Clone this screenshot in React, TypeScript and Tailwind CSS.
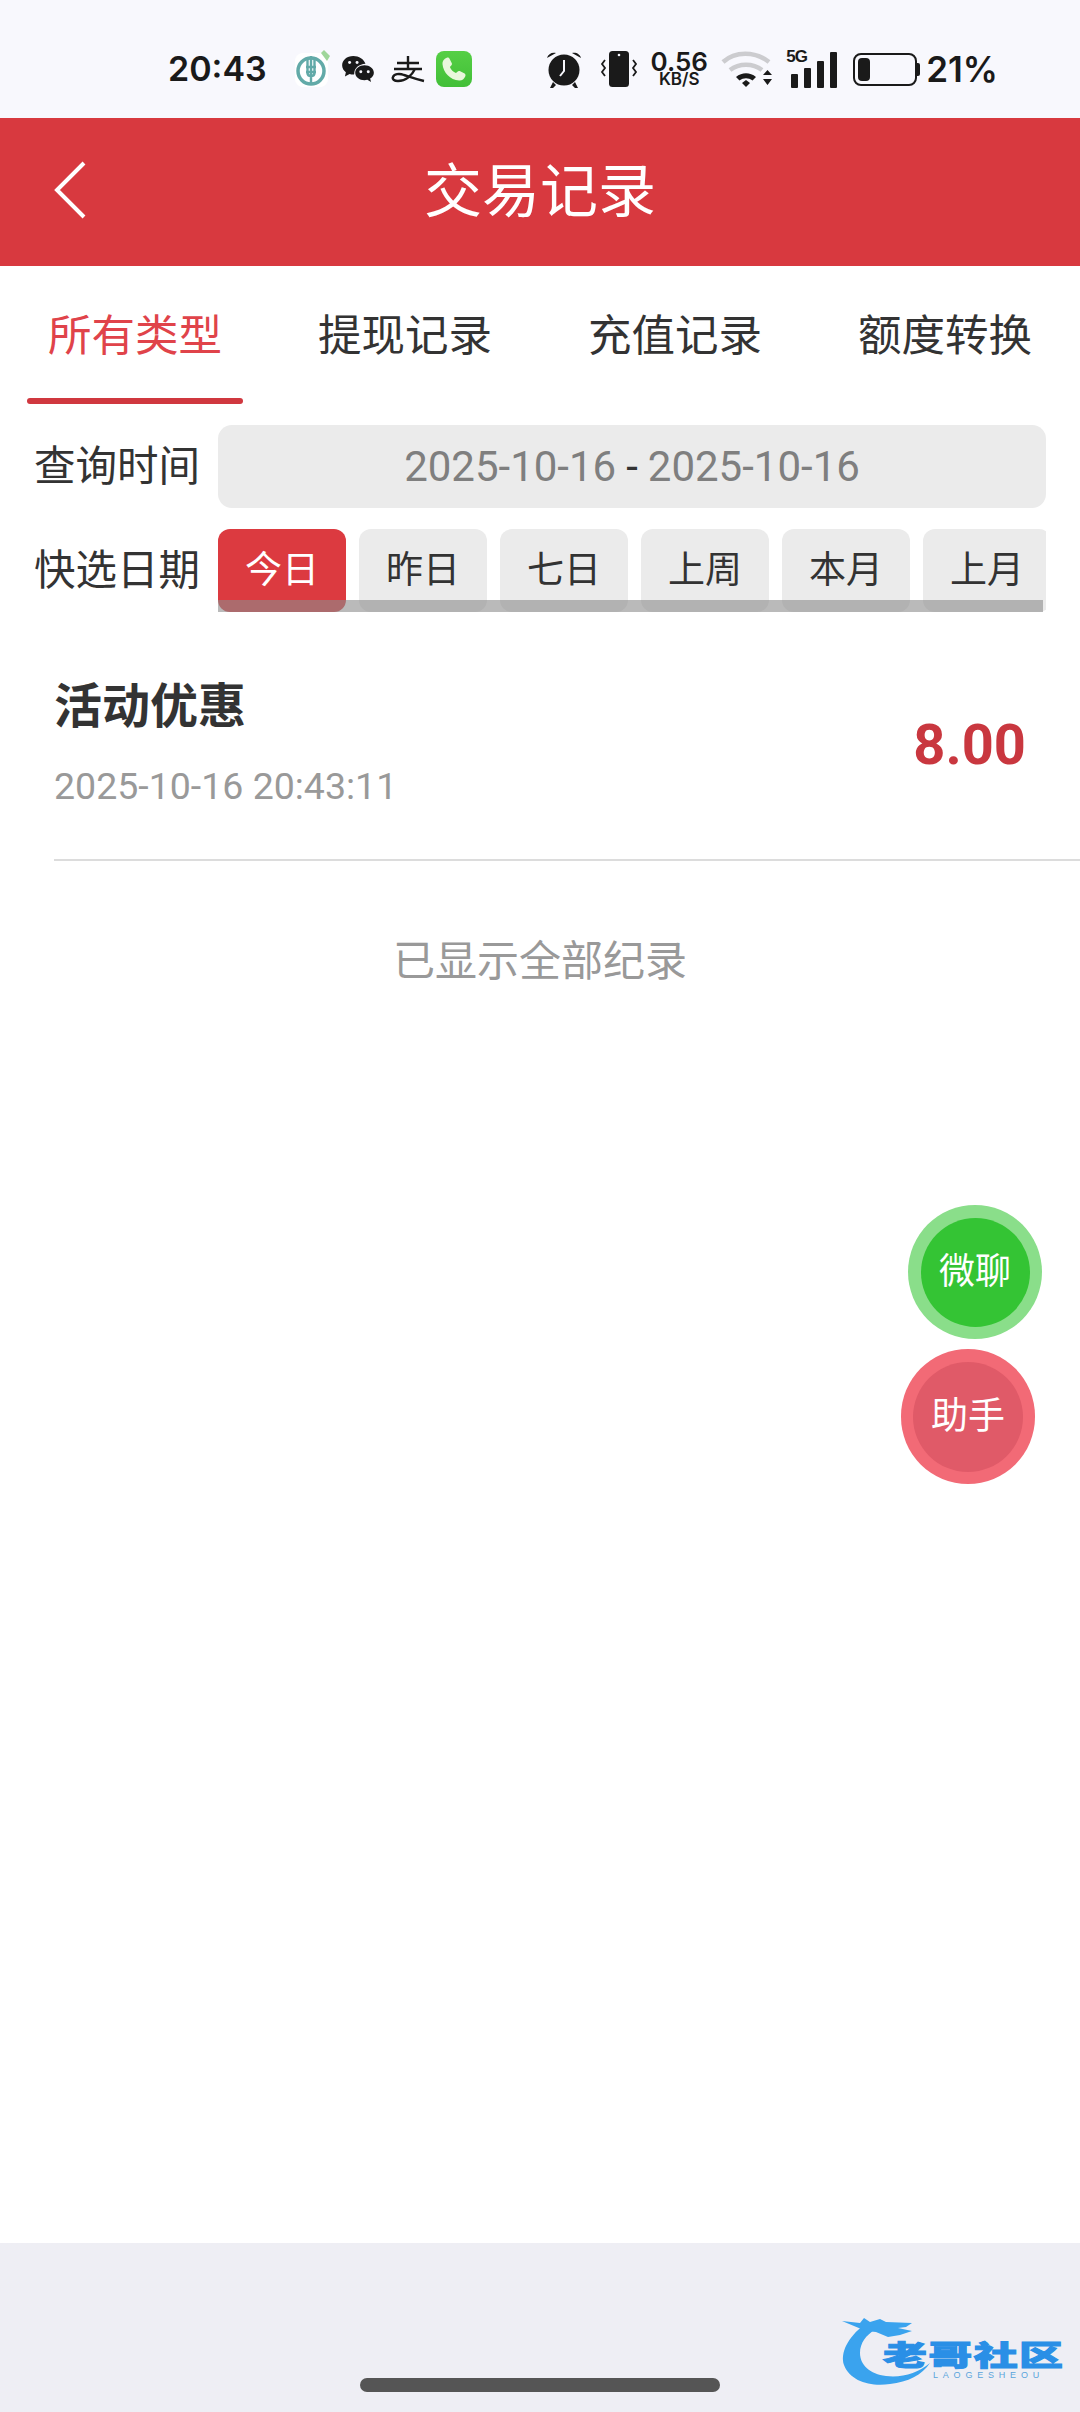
const TABS = ["所有类型", "提现记录", "充值记录", "额度转换"];
const QUICK_DATES = ["今日", "昨日", "七日", "上周", "本月", "上月"];

function AppIcons() {
  return (
    <div className="ml-[27px] flex items-center gap-[11px]">
      {/* bank app */}
      <svg width="36" height="38" viewBox="0 0 36 38">
        <rect x="1" y="3" width="33" height="34" rx="8" fill="#ffffff" />
        <circle cx="17" cy="21" r="13" fill="none" stroke="#62aaa8" strokeWidth="3.500" />
        <path d="M13.500 9v14c0 2 1.500 3 3.500 3s3.500-1 3.500-3V9M17 6v28M12 17h10M12 22h10" stroke="#62aaa8" strokeWidth="2.400" fill="none" />
        <path d="M27 3l3-3 6 6-3 5z" fill="#9fd69a" />
      </svg>
      {/* wechat */}
      <svg width="34" height="28" viewBox="0 0 36 30">
        <path d="M13 1C6 1 1 5.500 1 11c0 3 1.500 5.700 4 7.500L4 23l5-2.700c1.300.4 2.600.6 4 .6 1 0 1-.5 1-2 .5-5 5-9 12-9.500C24.500 4.500 19 1 13 1z" fill="#1a1a1a" />
        <path d="M25 11c-5.500 0-10 3.500-10 8s4.500 8 10 8c1 0 2-.1 3-.4l4 2.400-1-3.700c2.500-1.500 4-3.700 4-6.300 0-4.500-4.500-8-10-8z" fill="#1a1a1a" />
        <circle cx="21" cy="18" r="1.600" fill="#f8f8fd" />
        <circle cx="29" cy="18" r="1.600" fill="#f8f8fd" />
        <circle cx="9" cy="8" r="1.600" fill="#f8f8fd" />
        <circle cx="17" cy="8" r="1.600" fill="#f8f8fd" />
      </svg>
      {/* alipay */}
      <svg width="34" height="27" viewBox="0 0 34 27" className="ml-[5px]">
        <path d="M6 7h22M17 0v13M3 13h28M24 13c-3 6-9 12-17 12-4 0-6-2-5-4 1-3 6-4 11-2 6 2 11 4 20 6" stroke="#1a1a1a" strokeWidth="2.400" fill="none" />
      </svg>
      {/* phone */}
      <div className="flex h-[36px] w-[36px] items-center justify-center rounded-[8px] bg-gradient-to-b from-[#55cf45] to-[#42bf38]">
        <svg width="27" height="27" viewBox="0 0 24 24">
          <path d="M6 1.500c1-.5 2 0 2.500 1l2 4c.3.700.1 1.400-.5 2L8.800 9.800c1 2.400 3 4.400 5.400 5.400l1.300-1.300c.6-.6 1.300-.8 2-.5l4 2c1 .5 1.500 1.500 1 2.500-1 2.500-3 4-5.500 3.800C9 21 3 15 2.200 7c-.2-2.500 1.300-4.500 3.800-5.500z" fill="#e8f7dc" />
        </svg>
      </div>
    </div>
  );
}

function SystemIcons() {
  return (
    <div className="flex items-center">
      {/* alarm */}
      <svg width="38" height="40" viewBox="0 0 38 40">
        <circle cx="19" cy="21" r="15.500" fill="#1a1a1a" />
        <path d="M2 9c1-4 5-6 9-5zM36 9c-1-4-5-6-9-5zM8 33l-3 6h3l3-3zM30 33l3 6h-3l-3-3z" fill="#1a1a1a" />
        <path d="M19 11v11l-4 5" stroke="#f8f8fd" strokeWidth="2" fill="none" />
      </svg>
      {/* vibrate */}
      <svg width="40" height="38" viewBox="0 0 40 38" className="ml-[16px]">
        <rect x="10" y="1" width="20" height="36" rx="3.500" fill="#1a1a1a" />
        <circle cx="20" cy="5" r="1.300" fill="#f8f8fd" />
        <path d="M6 10l-3 4 3 4-3 4 3 4M34 10l3 4-3 4 3 4-3 4" stroke="#1a1a1a" strokeWidth="1.800" fill="none" />
      </svg>
      <div className="ml-[10px] flex w-[60px] flex-col items-center font-['Inter',sans-serif] font-semibold text-[#1a1a1a]">
        <span className="text-[26px] leading-[21px]">0.56</span>
        <span className="text-[17px] leading-[15px]">KB/S</span>
      </div>
      {/* wifi */}
      <svg width="52" height="38" viewBox="0 0 52 38" className="ml-[12px]">
        <path d="M2 12c12-11 32-11 46 0M9 20c9-7 23-7 32 0" stroke="#cccccf" strokeWidth="4.500" fill="none" />
        <path d="M15 27c6-5 14-5 20 0l-3.500 3.500c-4-3-9-3-13 0zM21 33l4-3 4 3-4 4z" fill="#1a1a1a" />
        <path d="M42 25h9l-4.500-5zM42 29h9l-4.500 6z" fill="#1a1a1a" />
      </svg>
      {/* signal */}
      <div className="relative ml-[13px] h-[38px] w-[53px]">
        <span className="absolute -top-[2px] left-0 font-['Liberation_Sans',sans-serif] text-[17px] font-bold leading-[18px] tracking-[-1px] text-[#1a1a1a]">5G</span>
        <div className="absolute bottom-0 left-[5px] flex items-end gap-[6px]">
          <div className="h-[14px] w-[7px] rounded-[1px] bg-[#1a1a1a]" />
          <div className="h-[20px] w-[7px] rounded-[1px] bg-[#1a1a1a]" />
          <div className="h-[27px] w-[7px] rounded-[1px] bg-[#1a1a1a]" />
          <div className="h-[36px] w-[7px] rounded-[1px] bg-[#1a1a1a]" />
        </div>
      </div>
      {/* battery */}
      <div className="ml-[14px] flex items-center">
        <div className="flex h-[33px] w-[64px] items-center rounded-[8px] border-2 border-[#1a1a1a] px-[3px]">
          <div className="h-[23px] w-[12px] rounded-[4px] bg-[#1a1a1a]" />
        </div>
        <div className="h-[13px] w-[3px] rounded-r-[2px] bg-[#1a1a1a]" />
      </div>
      <span className="ml-[6px] font-['Inter',sans-serif] text-[35px] font-semibold leading-none text-[#1a1a1a]">21%</span>
    </div>
  );
}

function StatusBar() {
  return (
    <div className="flex h-[118px] items-center justify-between bg-[#f8f8fd] pl-[168px] pr-[82px] pt-[20px]">
      <div className="flex items-center">
        <span className="font-['Inter',sans-serif] text-[34px] font-semibold leading-none text-[#1a1a1a]">20:43</span>
        <AppIcons />
      </div>
      <SystemIcons />
    </div>
  );
}

function Logo() {
  return (
    <div className="relative h-[70px] w-[225px]">
      <svg width="100" height="75" viewBox="0 0 100 75" className="absolute left-0 top-0">
        <path d="M24 10C8 22 0 38 4 50c6 16 26 22 46 19 18-2 32-9 40-21-12 10-28 15-44 13-16-2-26-11-26-23 0-10 6-18 16-24z" fill="#3aa3ee" />
        <path d="M2 6l18 2 4-5 6 4 10-3 6 3 26 1-6 4-8 1 14 3-12 4-12 2-12-5-10-1-12-5z" fill="#3aa3ee" />
      </svg>
      <div className="absolute left-[43px] top-[17px] flex w-[180px] scale-y-[0.65] justify-between font-['Noto_Sans_CJK_SC',sans-serif] text-[44px] font-black leading-[44px] text-[#2a8fe6] [-webkit-text-stroke:1.500px_#2a8fe6]">
        <span>老</span>
        <span>哥</span>
        <span>社</span>
        <span>区</span>
      </div>
      <span className="absolute left-[93px] top-[56px] font-['Liberation_Sans',sans-serif] text-[9px] leading-[9px] tracking-[4.800px] text-[#5aa5dc]">LAOGESHEOU</span>
    </div>
  );
}

export default function App() {
  return (
    <div className="relative flex h-[2412px] w-[1080px] flex-col overflow-hidden bg-white font-['Roboto','Noto_Sans_CJK_SC',sans-serif]">
      <StatusBar />

      <header className="relative flex h-[148px] items-center justify-center bg-[#d8393f]">
        <svg width="34" height="58" viewBox="0 0 34 58" className="absolute left-[53px] top-[43px]">
          <path d="M31 2L4 29l27 27" stroke="#ffffff" strokeWidth="4" fill="none" />
        </svg>
        <h1 className="text-[58px] font-normal leading-none text-white">交易记录</h1>
      </header>

      <nav className="grid h-[139px] grid-cols-4">
        {TABS.map((tab, i) => (
          <div key={tab} className="relative flex items-center justify-center pt-[3px]">
            <span className={i === 0 ? "text-[43.500px] leading-none text-[#e0434a]" : "text-[43.500px] leading-none text-[#333333]"}>{tab}</span>
            {i === 0 && <div className="absolute bottom-[1px] left-[27px] h-[6px] w-[216px] rounded-[3px] bg-[#d0383f]" />}
          </div>
        ))}
      </nav>

      <div className="flex flex-col gap-[21px] pl-[34px] pr-[34px] pt-[20px]">
        <div className="flex items-center">
          <span className="w-[184px] shrink-0 text-[41.500px] leading-none text-[#333333]">查询时间</span>
          <div className="flex h-[83px] flex-1 items-center justify-center gap-[10px] rounded-[14px] bg-[#ebebeb] text-[42px] text-[#7f7f7f]">
            <span>2025-10-16</span>
            <span className="text-[#333333]">-</span>
            <span>2025-10-16</span>
          </div>
        </div>
        <div className="flex items-center">
          <span className="w-[184px] shrink-0 text-[41.500px] leading-none text-[#333333]">快选日期</span>
          <div className="relative h-[83px] flex-1 overflow-hidden">
            <div className="flex gap-[13px]">
              {QUICK_DATES.map((d, i) => (
                <div
                  key={d}
                  className={
                    i === 0
                      ? "flex h-[83px] w-[128px] shrink-0 items-center justify-center rounded-[12px] bg-[#dc3a40] text-[37px] text-white"
                      : "flex h-[83px] w-[128px] shrink-0 items-center justify-center rounded-[12px] bg-[#ebebeb] text-[37px] text-[#333333]"
                  }
                >
                  {d}
                </div>
              ))}
            </div>
            {/* scrollbar thumb sitting over the chips */}
            <div className="absolute bottom-0 left-0 h-[12px] w-[825px] bg-[#8c8c8c99]" />
          </div>
        </div>
      </div>

      <div className="ml-[54px] mt-[22px] flex h-[227px] items-center justify-between border-b-2 border-[#dcdcdc] pb-[4px] pr-[54px]">
        <div className="flex flex-col gap-[37px]">
          <span className="text-[48px] font-bold leading-none text-[#333333]">活动优惠</span>
          <span className="text-[37.500px] leading-none text-[#999999]">2025-10-16 20:43:11</span>
        </div>
        <span className="text-[56px] font-bold leading-none text-[#c9373f]">8.00</span>
      </div>

      <p className="mt-[80px] text-center text-[42px] leading-none text-[#999999]">已显示全部纪录</p>

      <div className="flex-1" />

      <footer className="relative flex h-[169px] justify-end bg-[#eeeef4] pr-[15px] pt-[72px]">
        <Logo />
        <div className="absolute bottom-[20px] left-[360px] h-[14px] w-[360px] rounded-full bg-[#555555]" />
      </footer>

      {/* floating buttons */}
      <div className="absolute left-[908px] top-[1205px] flex h-[134px] w-[134px] items-center justify-center rounded-full bg-[#8ade8a]">
        <div className="flex h-[109px] w-[109px] items-center justify-center rounded-full bg-[#34c434] text-[36px] text-white">微聊</div>
      </div>
      <div className="absolute left-[901px] top-[1349px] flex h-[135px] w-[134px] items-center justify-center rounded-full bg-[#f26a76]">
        <div className="flex h-[110px] w-[110px] items-center justify-center rounded-full bg-[#e05a68] text-[37px] text-white">助手</div>
      </div>
    </div>
  );
}
